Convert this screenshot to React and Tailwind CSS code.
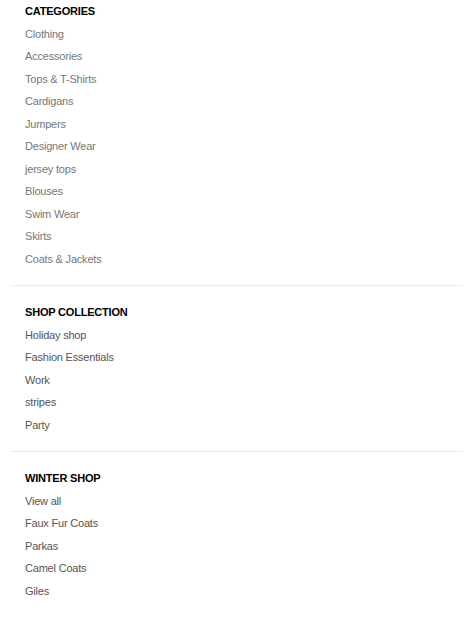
const sections = [
  {
    title: 'CATEGORIES',
    color: 'text-[#777777]',
    items: ['Clothing', 'Accessories', 'Tops & T-Shirts', 'Cardigans', 'Jumpers', 'Designer Wear', 'jersey tops', 'Blouses', 'Swim Wear', 'Skirts', 'Coats & Jackets'],
  },
  {
    title: 'SHOP COLLECTION',
    color: 'text-[#555555]',
    items: ['Holiday shop', 'Fashion Essentials', 'Work', 'stripes', 'Party'],
  },
  {
    title: 'WINTER SHOP',
    color: 'text-[#555555]',
    items: ['View all', 'Faux Fur Coats', 'Parkas', 'Camel Coats', 'Giles'],
  },
];

export default function App() {
  return (
    <div className="w-[464px] h-[620px] bg-white font-['Liberation_Sans',Arial,sans-serif] text-[11px] leading-[22.5px] tracking-[-0.2px]">
      {sections.map((s, i) => (
        <div key={s.title}>
          {i > 0 && <div className="ml-[10px] mr-px h-px bg-[#ececec] mt-[15px] mb-[15px]" />}
          <ul className="pl-[25px]">
            <li className="font-bold text-black">{s.title}</li>
            {s.items.map((item) => (
              <li key={item} className={s.color}>{item}</li>
            ))}
          </ul>
        </div>
      ))}
    </div>
  );
}
